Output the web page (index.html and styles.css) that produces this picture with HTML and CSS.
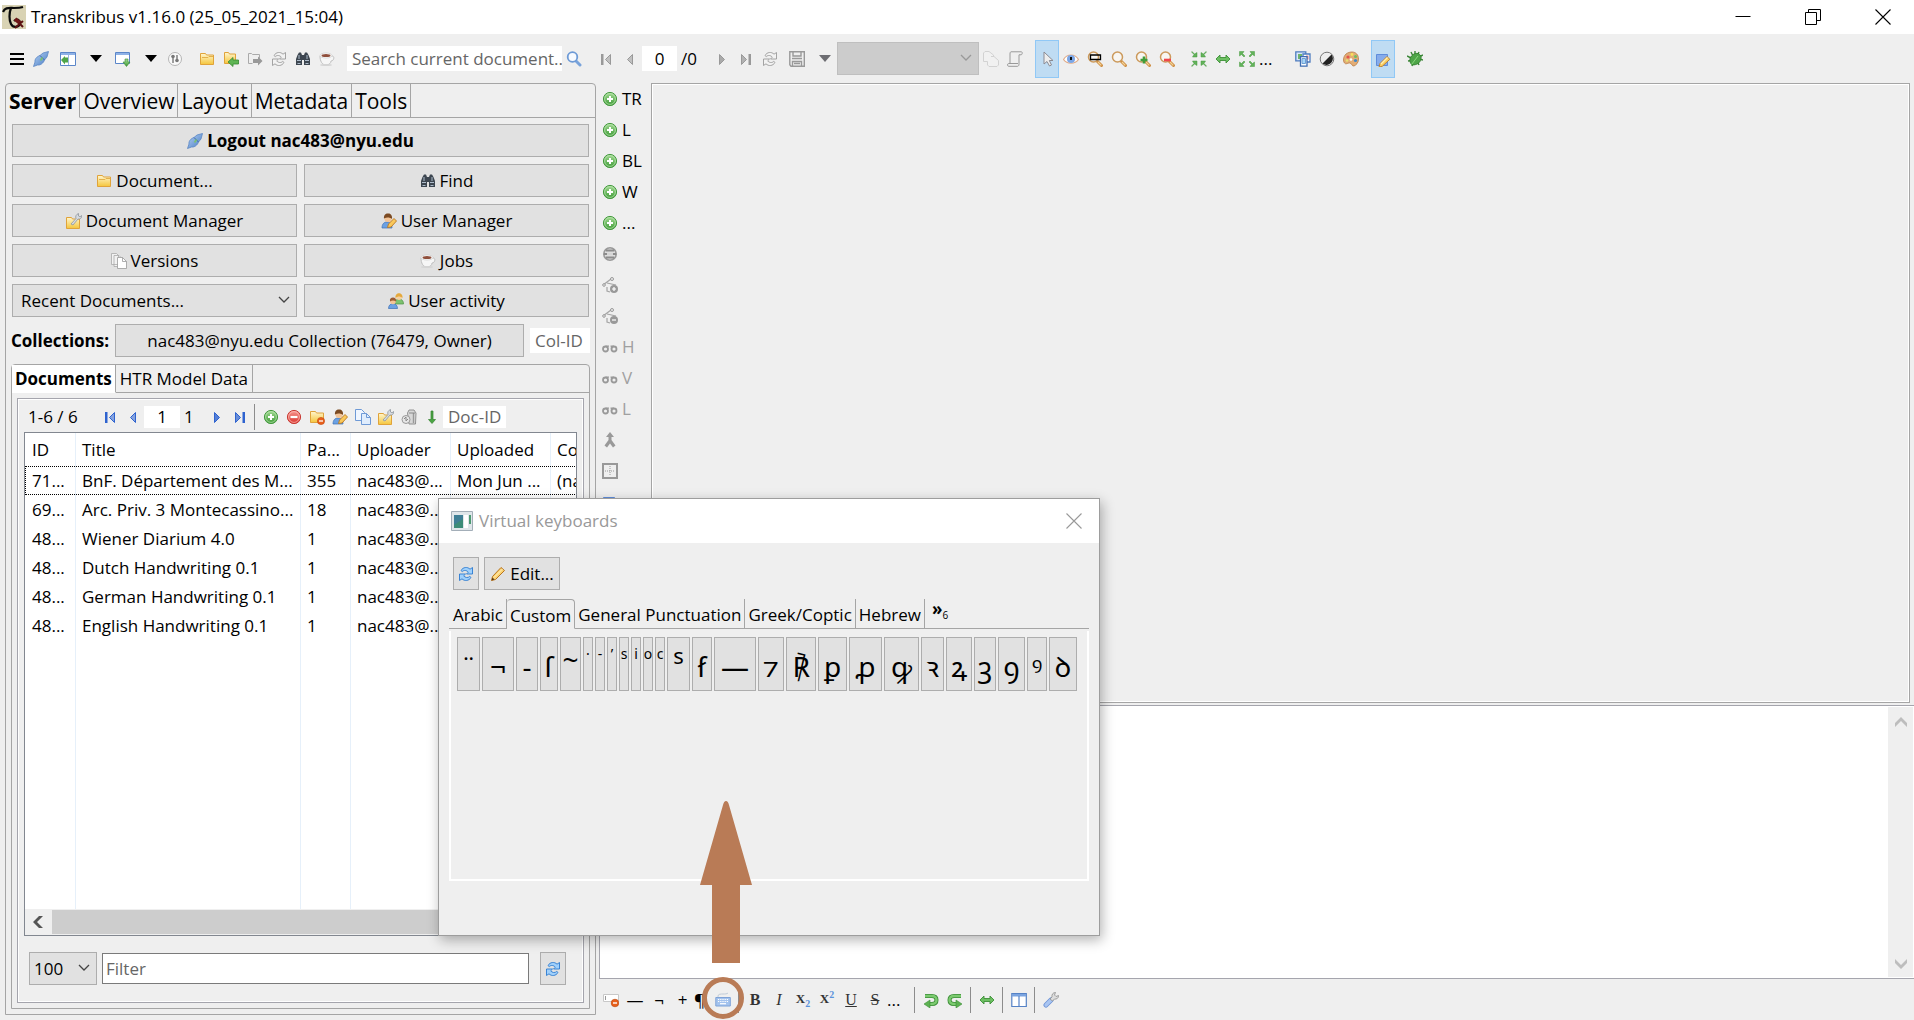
FILE: index.html
```html
<!DOCTYPE html>
<html lang="en">
<head>
<meta charset="utf-8">
<title>Transkribus v1.16.0</title>
<link rel="stylesheet" href="styles.css">
</head>
<body>
<svg class="sprite" aria-hidden="true">
  <defs>
    <linearGradient id="gGold" x1="0" y1="0" x2="0" y2="1"><stop offset="0" stop-color="#fff6cf"/><stop offset="1" stop-color="#f5c63c"/></linearGradient>
    <linearGradient id="gBlue" x1="0" y1="0" x2="1" y2="1"><stop offset="0" stop-color="#b9d5f7"/><stop offset="1" stop-color="#4478c0"/></linearGradient>
    <linearGradient id="gGreen" x1="0" y1="0" x2="0" y2="1"><stop offset="0" stop-color="#a5dc95"/><stop offset="1" stop-color="#3c9a35"/></linearGradient>
    <linearGradient id="gRed" x1="0" y1="0" x2="0" y2="1"><stop offset="0" stop-color="#f79a92"/><stop offset="1" stop-color="#d9322b"/></linearGradient>
  </defs>
  <symbol id="plug" viewBox="0 0 16 16"><path d="M.5 15.500L2 11C1.500 8 4 5.500 7 4.500L10 2l5.500-1.500L14 6l-2.500 3c-1 3-4 5.500-7 5z" fill="url(#gBlue)" stroke="#5b87c5" stroke-width=".8"/><path d="M7 4.500l4.500 4.500" stroke="#3d68a8"/><path d="M7.500 9.500l2-3" stroke="#79c26c" stroke-width="1.600"/></symbol>
  <symbol id="panel-l" viewBox="0 0 16 16"><path d="M.5 1.500h15v13H.5z" fill="#fff" stroke="#5b86c9"/><path d="M1 2h14v2H1z" fill="#8fb2e6"/><path d="M8.500 4v10" stroke="#9ab7e0"/><path d="M8 6.500v5H5v2L1 9l4-4v1.500z" fill="#4fa548"/></symbol>
  <symbol id="panel-d" viewBox="0 0 16 16"><path d="M.5 1.500h14v11H.5z" fill="#fff" stroke="#5b86c9"/><path d="M1 2h13v2H1z" fill="#8fb2e6"/><path d="M10 8h3v3h2l-3.500 4.500L8 11h2z" fill="url(#gGreen)" stroke="#3b8b35" stroke-width=".6"/></symbol>
  <symbol id="gear" viewBox="0 0 16 16"><circle cx="8" cy="8" r="6.500" fill="#fafafa" stroke="#b5b5b5"/><path d="M6 5v7M10 4v5" stroke="#777" stroke-width="1.400"/><circle cx="6" cy="5.500" r="1.800" fill="#777"/><circle cx="10" cy="9.500" r="1.800" fill="#777"/></symbol>
  <symbol id="folder" viewBox="0 0 16 16"><path d="M1.500 13.500v-11h5l1 1.500h7v9.500z" fill="url(#gGold)" stroke="#e0a33a"/><path d="M3 6.500h6l1-1h4" fill="none" stroke="#e3b04b"/></symbol>
  <symbol id="folder-in" viewBox="0 0 16 16"><path d="M1.500 12.500v-11h4l1 1.500h6v9.500z" fill="url(#gGold)" stroke="#e0a33a"/><path d="M15.500 9v4H10v2.500L5 11l5-4.500V9z" fill="#5fb554" stroke="#368a30" stroke-width=".8"/></symbol>
  <symbol id="export" viewBox="0 0 16 16"><path d="M1.500 12.500v-10h3l1 1h7v4M1.500 12.500h4" fill="none" stroke="#aaa"/><path d="M6 8h5V5.500L15.500 10 11 14.500V12H6z" fill="#999"/></symbol>
  <symbol id="refresh" viewBox="0 0 16 16"><g fill="#9fd0fb" stroke="#2b7bd0" stroke-width=".9" stroke-linejoin="round"><path d="M3 4.500C5 1 9.500.5 12 3.200L14.500 1.500V8H8.500l1.800-1.800C9 4.300 6 3.800 4.200 5.600z"/><path d="M13 11.500c-2 3.500-6.500 4-9 1.300L1.500 14.500V8h6L5.700 9.800c1.300 1.900 4.300 2.400 6.100.6z"/></g></symbol>
  <symbol id="refresh-g" viewBox="0 0 16 16"><g fill="#f2f2f2" stroke="#9a9a9a" stroke-width=".9" stroke-linejoin="round"><path d="M3 4.500C5 1 9.500.5 12 3.200L14.500 1.500V8H8.500l1.800-1.800C9 4.300 6 3.800 4.200 5.600z"/><path d="M13 11.500c-2 3.500-6.500 4-9 1.300L1.500 14.500V8h6L5.700 9.800c1.300 1.900 4.300 2.400 6.100.6z"/></g></symbol>
  <symbol id="binoc" viewBox="0 0 16 16"><path d="M2.500 4L4 1.500h2L7 4h2l1-2.500h2L13.500 4l1.500 4v6H9V9H7v5H1V8z" fill="#3d4650"/><path d="M2 9.500h4M10 9.500h4M4 4v4M12 4v4M2.500 12.500h3M10.500 12.500h3" stroke="#aebccb"/></symbol>
  <symbol id="cup" viewBox="0 0 16 16"><path d="M1 5c0 5 2 9 6 9 3 0 5-2 5-4 3 0 4-5 1-5z" fill="#f6f6f6" stroke="#bbb" stroke-width=".9"/><ellipse cx="7" cy="4.500" rx="6" ry="2.500" fill="#fff" stroke="#ccc" stroke-width=".7"/><ellipse cx="7" cy="4.600" rx="4.500" ry="1.500" fill="#8f4f3c"/><ellipse cx="7" cy="14" rx="6" ry="1" fill="#d4d4d4"/></symbol>
  <symbol id="lens" viewBox="0 0 16 16"><path d="M10 10l4 4" stroke="#79a3db" stroke-width="3" stroke-linecap="round"/><circle cx="6.500" cy="6" r="4.800" fill="#f6faff" stroke="#6d9ad6" stroke-width="1.800"/></symbol>
  <symbol id="zoom" viewBox="0 0 16 16"><path d="M10 10l4.500 4.500" stroke="#cf8f45" stroke-width="3" stroke-linecap="round"/><path d="M11 11l3.300 3.300" stroke="#f3d497" stroke-width="1.200"/><circle cx="6.500" cy="6" r="5" fill="#f8f6f2" stroke="#cc9a5c" stroke-width="1.500"/></symbol>
  <symbol id="first" viewBox="0 0 16 16"><path d="M3 3h2.500v11H3z" fill="currentColor"/><path d="M12.500 3.500v10l-5-5z" fill="currentColor" fill-opacity=".55" stroke="currentColor"/></symbol>
  <symbol id="prev" viewBox="0 0 16 16"><path d="M10.500 3.500v10l-5-5z" fill="currentColor" fill-opacity=".55" stroke="currentColor"/></symbol>
  <symbol id="next" viewBox="0 0 16 16"><path d="M5.500 3.500v10l5-5z" fill="currentColor" fill-opacity=".8" stroke="currentColor"/></symbol>
  <symbol id="last" viewBox="0 0 16 16"><path d="M10.500 3H13v11h-2.500z" fill="currentColor"/><path d="M3.500 3.500v10l5-5z" fill="currentColor" fill-opacity=".7" stroke="currentColor"/></symbol>
  <symbol id="save" viewBox="0 0 16 16"><path d="M.8.800h14.500v14.500H2l-1.200-1.500z" fill="#efefef" stroke="#999" stroke-width="1.400"/><path d="M4 1v4h8V1M3 7.500h10M3.500 15v-4.500h9V15M5 12.500h6" fill="none" stroke="#999" stroke-width="1.400"/></symbol>
  <symbol id="pages-g" viewBox="0 0 16 16"><path d="M.5 4V2l1.500-1.500h4L10.500 4v2M.5 4v6.500h4V14l1.500 1.500h8l1.500-1.500V9.500L11 5.500H8" fill="#f1f1f1" stroke="#d2d2d2"/></symbol>
  <symbol id="scroll" viewBox="0 0 16 16"><path d="M4 .8h10.500c1 0 1 3-.5 3h-2v9c0 1.500-.5 2.500-1.500 2.500H1.500C.3 15.300.3 12.500 1.500 12.500H3V3C3 1.500 3.500.8 4 .8z" fill="#efefef" stroke="#999"/><path d="M3 12.500h8" stroke="#999"/></symbol>
  <symbol id="cursor" viewBox="0 0 16 16"><path d="M5 1v12l3-2.500L10.500 15l2-1-2.200-4.500H14z" fill="#eee" stroke="#8b8b93"/></symbol>
  <symbol id="eye" viewBox="0 0 16 16"><path d="M.5 8.500C4 2.500 12 2.500 15.500 8.500 12 13.500 4 13.500.5 8.500z" fill="#fff" stroke="#e0ab88" stroke-width="1.200"/><circle cx="8" cy="8" r="4" fill="#7ba6e6"/><path d="M7 6h2v3H7z" fill="#111"/></symbol>
  <symbol id="fit-in" viewBox="0 0 16 16"><g fill="#62b35a" stroke="#4a9a43" stroke-width=".5"><path d="M1 .5l2.500 2.500L6 1.500V6H1.500L3 3.500.5 1z"/><path d="M15 .5L12.500 3 10 1.500V6h4.500L13 3.500 15.500 1z"/><path d="M1 15.500L3.500 13 6 14.500V10H1.500L3 12.500.5 15z"/><path d="M15 15.500L12.500 13 10 14.500V10h4.500L13 12.500l2.500 2.500z"/></g></symbol>
  <symbol id="fit-out" viewBox="0 0 16 16"><g fill="#62b35a" stroke="#4a9a43" stroke-width=".5"><path d="M.5.500H5L3.500 2.500 6 5 5 6 2.500 3.500.5 5z"/><path d="M15.500.500H11l1.500 2L10 5l1 1 2.500-2.500 2 1.500z"/><path d="M.5 15.500H5L3.500 13.500 6 11 5 10l-2.500 2.500L.5 11z"/><path d="M15.500 15.500H11l1.500-2L10 11l1-1 2.500 2.500 2-1.500z"/></g></symbol>
  <symbol id="h-arrow" viewBox="0 0 16 16"><path d="M1 8l4-4v2.500h6V4l4 4-4 4V9.500H5V12z" fill="#6cbf61" stroke="#3d8e38" stroke-width=".9"/></symbol>
  <symbol id="layers" viewBox="0 0 16 16"><path d="M.8.800h10v9h-10z" fill="#d8e7fb" stroke="#4e7cbf" stroke-width="1.300"/><path d="M3 3h4v5H3z" fill="#71b46b"/><path d="M8 3h7v8H8z" fill="#fff" stroke="#4e7cbf" stroke-width="1.300"/><path d="M11 4.500h2.500v4H11z" fill="#e28a8a"/><path d="M5.500 5.700H12v9.500H5.500z" fill="#fff" stroke="#3d6cb2" stroke-width="1.300"/><path d="M7 7.500h3.500v5H7z" fill="#a6d5f7" stroke="#6ea0d5"/></symbol>
  <symbol id="contrast" viewBox="0 0 16 16"><circle cx="8" cy="8" r="6.800" fill="#eee" stroke="#777"/><path d="M12.500 3.500a6.400 6.400 0 0 1-9 9z" fill="#222"/></symbol>
  <symbol id="palette" viewBox="0 0 16 16"><path d="M9 1c4 0 6.500 3 6.500 7S13 14 11 15c-2 .5-2-2.500-4-3S3 14 1.500 12 0 6 3 3c2-1.500 4-2 6-2z" fill="#e2ad76" stroke="#b97c44" stroke-width=".8"/><circle cx="5" cy="6" r="1.600" fill="#e5534a"/><circle cx="9" cy="3.500" r="1.400" fill="#f8e15c"/><circle cx="12.500" cy="5.500" r="1.500" fill="#6fbf5f"/><circle cx="12.500" cy="9.500" r="1.600" fill="#3f87c9"/><circle cx="8" cy="8.500" r="1.300" fill="#fff"/><circle cx="4" cy="9.500" r="1.300" fill="#e8e36f"/></symbol>
  <symbol id="edit-shape" viewBox="0 0 16 16"><path d="M1.500 3.500h11v11h-11z" fill="#86aceb" stroke="#5f8ddb"/><path d="M4 16l1-3.500 7-7 2.800 2.800-7.500 7z" fill="#fbcf62" stroke="#bd7d25" stroke-width=".9"/><path d="M6 13l6.500-6.500" stroke="#fff0b5" stroke-width="1.300"/></symbol>
  <symbol id="bug" viewBox="0 0 16 16"><path d="M0 5l4 2M1 10l4-.5M5 15l1-4M4 1l2 4M8 0v5M12 1l-2 4M16 4l-4 2M16 9l-4-1M12 14l-2-4" stroke="#3a8636" stroke-width="1.400"/><path d="M7 3c4-2 8 1 7 5-1 4-4 6-9 6C1 10 3 5 7 3z" fill="#4ea548" stroke="#2e7a2b" stroke-width=".8"/><path d="M4.500 13.500L11 5" stroke="#8ad77d"/></symbol>
  <symbol id="plus" viewBox="0 0 16 16"><circle cx="8" cy="8" r="6.600" fill="url(#gGreen)" stroke="#459a40"/><circle cx="8" cy="8" r="5.400" fill="none" stroke="#bfe6b4" stroke-width=".7"/><path d="M8 5v6M5 8h6" stroke="#fff" stroke-width="2"/></symbol>
  <symbol id="minus" viewBox="0 0 16 16"><circle cx="8" cy="8" r="6.600" fill="url(#gRed)" stroke="#c83b34"/><circle cx="8" cy="8" r="5.400" fill="none" stroke="#ffc4be" stroke-width=".7"/><path d="M4.500 8h7" stroke="#fff" stroke-width="2.200"/></symbol>
  <symbol id="folder-x" viewBox="0 0 16 16"><path d="M1.500 13.500v-11h5l1 1.500h7v9.500z" fill="url(#gGold)" stroke="#e0a33a"/><circle cx="12" cy="12" r="3.600" fill="#e8601c" stroke="#c2470c" stroke-width=".6"/><path d="M10 12h4" stroke="#fff" stroke-width="1.300"/></symbol>
  <symbol id="folder-w" viewBox="0 0 16 16"><path d="M.5 15.500v-11h5l1 1.500h7v9.500z" fill="url(#gGold)" stroke="#e0a33a"/><path d="M5 11l5-5.500c-.8-2 0-4 2.500-5v2.500l1.500.8L15.700 2.500c.3 2.500-1.700 4-3.700 3.500L7 12z" fill="#d7dbe0" stroke="#8e959d" stroke-width=".8"/></symbol>
  <symbol id="user-edit" viewBox="0 0 16 16"><path d="M1 15c0-4 2-6 5-6s5 2 5 6z" fill="#6ba1e3" stroke="#3c70b4" stroke-width=".7"/><circle cx="7" cy="5.500" r="3.600" fill="#f3c497"/><path d="M3 5.500c-.5-3.500 2-5.500 4.500-5C10 .5 11.500 3 11 6 9 4.500 6 4 3 5.500z" fill="#7b4a22"/><path d="M6.500 14.500l1-3.500L13 5.500l2.500 2.500-5.500 6z" fill="#fac85a" stroke="#b97620" stroke-width=".9"/></symbol>
  <symbol id="users" viewBox="0 0 16 16"><path d="M7 11c0-3 1-5 4-5s4.500 2 4.500 5z" fill="#7cc26f" stroke="#4d9345" stroke-width=".7"/><circle cx="11" cy="4" r="3" fill="#f6d09f"/><path d="M7.500 5C7 2 9 .3 11 .3S15 2 14.500 5c-2-2-5-2-7 0z" fill="#e5a93c"/><path d="M.5 15.500c0-3 2-5 4.500-5s4.500 2 4.500 5z" fill="#6ba1e3" stroke="#3c70b4" stroke-width=".7"/><circle cx="5" cy="8.500" r="2.800" fill="#f3c497"/><path d="M2 8.500c-.5-3 1-4 3-4s3.500 1 3 4c-2-1.500-4-1.500-6 0z" fill="#9c5c33"/></symbol>
  <symbol id="versions" viewBox="0 0 16 16"><path d="M.5.500h5l2 2v9h-7zM3 2.500h5l2 2v9H3z" fill="#f2f2f2" stroke="#aaa" stroke-width=".8"/><path d="M6.500 4.500h5l4 4v7h-9z" fill="#fff" stroke="#9a9a9a" stroke-width=".8"/><path d="M11.500 4.500v4h4" fill="none" stroke="#9a9a9a" stroke-width=".8"/></symbol>
  <symbol id="copy" viewBox="0 0 16 16"><path d="M.5.500h6l3 3v8h-9z" fill="#f0f6ff" stroke="#6f9ad6"/><path d="M6.500 4.500h5l4 4v7h-9z" fill="#e0edfd" stroke="#6f9ad6"/><path d="M11.500 4.500v4h4" fill="none" stroke="#6f9ad6"/></symbol>
  <symbol id="trash" viewBox="0 0 16 16"><path d="M6.500 4L8 1h5l2 3-.5 11H8z" fill="#d8d8d8" stroke="#888" stroke-width=".9"/><path d="M12.500 4v10" stroke="#999" stroke-width="1.400"/><path d="M8 4h6" stroke="#888"/><circle cx="5" cy="10.500" r="4" fill="#e6e6e6" stroke="#999"/><path d="M3 10l2-2v4l2-2" fill="none" stroke="#888"/></symbol>
  <symbol id="down" viewBox="0 0 16 16"><path d="M7 2h2v8.500h2.500L8 14.500 4.500 10.500H7z" fill="#4ba544" stroke="#34822f" stroke-width=".7"/></symbol>
  <symbol id="ring" viewBox="0 0 16 16"><circle cx="8" cy="8" r="6.200" fill="#ddd" stroke="#999" stroke-width="1.600"/><path d="M2 8h12M4 4.500h8M4 11.500h8" stroke="#8c8c8c" stroke-width="1.800"/><path d="M5 8h6" stroke="#eee" stroke-width="1.500"/></symbol>
  <symbol id="node-a" viewBox="0 0 16 16"><path d="M1 8l8-6M5 6l9 2M5 10v4l3 1" fill="none" stroke="#a4a4a4" stroke-width="1.200"/><circle cx="10" cy="2" r="1.500" fill="#efefef" stroke="#999"/><circle cx="2" cy="8" r="1.300" fill="#efefef" stroke="#999"/><circle cx="12" cy="12" r="4" fill="#999"/><path d="M12 10v4M10 12h4" stroke="#fff" stroke-width="1.200"/></symbol>
  <symbol id="node-r" viewBox="0 0 16 16"><path d="M1 8l8-6M5 6l9 2M5 10v4l3 1" fill="none" stroke="#a4a4a4" stroke-width="1.200"/><circle cx="10" cy="2" r="1.500" fill="#efefef" stroke="#999"/><circle cx="2" cy="8" r="1.300" fill="#efefef" stroke="#999"/><circle cx="12" cy="12" r="4" fill="#999"/><path d="M10 12h4" stroke="#fff" stroke-width="1.200"/></symbol>
  <symbol id="cut" viewBox="0 0 16 16"><circle cx="3.500" cy="10" r="2.500" fill="none" stroke="#999" stroke-width="1.800"/><circle cx="12" cy="10" r="2.500" fill="none" stroke="#999" stroke-width="1.800"/><path d="M3.500 7.200H7M8.500 7.200H12M9.500 7v3" stroke="#999" stroke-width="1.200"/></symbol>
  <symbol id="merge" viewBox="0 0 16 16"><path d="M8 0l4 5H9.500v3l4 5.500-2.500 2-3-4-3 4-2.500-2 4-5.500V5H4z" fill="#999"/></symbol>
  <symbol id="grid" viewBox="0 0 16 16"><path d="M1 1h14v14H1z" fill="#efefef" stroke="#999" stroke-width="2"/><path d="M8 3v10M3 8h10" stroke="#999" stroke-dasharray="1 1"/></symbol>
  <symbol id="pencil" viewBox="0 0 16 16"><path d="M1.500 14.500l1-4L11 1.500l3.500 3-9 9z" fill="#fbd272" stroke="#b8741d"/><path d="M1.500 14.500l1-3 2 2z" fill="#5a3b1a"/><path d="M4 11.500L12.500 3" stroke="#fff2c2"/></symbol>
  <symbol id="region-x" viewBox="0 0 16 16"><path d="M.5 2.500h15v7H.5z" fill="#fff" stroke="#c8c8c8"/><path d="M2.500 4v4" stroke="#999"/><circle cx="12" cy="11" r="3.800" fill="#e8601c" stroke="#b84309" stroke-width=".6"/><path d="M10 11h4" stroke="#fff" stroke-width="1.400"/></symbol>
  <symbol id="keyboard" viewBox="0 0 16 16"><path d="M3 5V4c0-2 3-2 5-2s4 0 5-1" fill="none" stroke="#c0cbd8"/><path d="M.8 5.500h14.500v8.500H.8z" fill="#a4c3ee" stroke="#7fa3d8"/><path d="M3 7.500h10M3 9.500h10" stroke="#fff" stroke-width="1.200" stroke-dasharray="1.200 1"/><path d="M5 11.700h6" stroke="#fff" stroke-width="1.200"/></symbol>
  <symbol id="undo" viewBox="0 0 16 16"><path d="M2 4h7c3 0 4.500 1.500 4.500 4S12 12 9 12H6" fill="none" stroke="#3d8e38" stroke-width="4"/><path d="M2 4h7c3 0 4.500 1.500 4.500 4S12 12 9 12H5" fill="none" stroke="#7bca6f" stroke-width="2.400"/><path d="M7 8v8l-6-4z" fill="#5cb151" stroke="#3d8e38" stroke-width=".6"/></symbol>
  <symbol id="split" viewBox="0 0 16 16"><path d="M.8 1.500h14.500v13H.8z" fill="#fff" stroke="#5582c6" stroke-width="1.200"/><path d="M1 2h14v2.500H1z" fill="#7ba4e0"/><path d="M8 4v10" stroke="#5582c6" stroke-width="1.200"/></symbol>
  <symbol id="wrench" viewBox="0 0 16 16"><path d="M3 13l5-5" stroke="#6e94d6" stroke-width="5" stroke-linecap="round"/><path d="M3 13l5-5" stroke="#a9c5f2" stroke-width="3.200" stroke-linecap="round"/><path d="M7 7l2-2c-.5-2.500 1-4.500 3.500-4.500l-1 2.500 1.500 1.500 2.500-1c.3 2.500-2 4-4 3.500L9.500 9z" fill="#ddd" stroke="#8e8e8e" stroke-width=".8"/></symbol>
  <symbol id="caret" viewBox="0 0 12 8"><path d="M0 0h12L6 7z" fill="currentColor"/></symbol>
  <symbol id="chev" viewBox="0 0 12 8"><path d="M1 1l5 5 5-5" fill="none" stroke="currentColor" stroke-width="1.300"/></symbol>
  <symbol id="sb-chev" viewBox="0 0 12 10"><path d="M0 6l6-6 6 6v4L6 4l-6 6z" fill="currentColor"/></symbol>
  <symbol id="close" viewBox="0 0 16 16"><path d="M.5.500l15 15M15.500.500l-15 15" stroke="currentColor" stroke-width="1.100"/></symbol>
</svg>

<div class="app">
  <header class="titlebar">
    <svg class="logo" viewBox="0 0 24 24" role="img" aria-label="Transkribus"><path d="M0 0h24v24H0z" fill="#d9d3b4"/><path d="M1 7C3 2 7 3 12 3s6 0 9-1M9 3C7 8 7 15 9 19c2 4 8 4 9-1 0-3-3-5-6-2" fill="none" stroke="#0a0a0a" stroke-width="2.200"/><path d="M13 14l5 4" stroke="#6e1616" stroke-width="4"/><path d="M17 18l4 4M21 16l-8 7" stroke="#5c1212" stroke-width="2"/></svg>
    <h1>Transkribus v1.16.0 (25_05_2021_15:04)</h1>
    <div class="winbtns">
      <button aria-label="Minimize"><svg viewBox="0 0 16 16"><path d="M.5 7.500h15" stroke="#000"/></svg></button>
      <button aria-label="Restore"><svg viewBox="0 0 16 16"><path d="M.5 3.500h11v12H.5zM3.500 3.500v-3h12v11h-4" fill="none" stroke="#000"/></svg></button>
      <button aria-label="Close"><svg><use href="#close"/></svg></button>
    </div>
  </header>

  <div class="toolbar" role="toolbar" aria-label="Main">
    <button class="t" aria-label="Menu"><svg viewBox="0 0 16 16"><path d="M1 3h14M1 8h14M1 13h14" stroke="#000" stroke-width="2"/></svg></button>
    <button class="t" aria-label="Login"><svg><use href="#plug"/></svg></button>
    <button class="t wide" aria-label="View"><svg><use href="#panel-l"/></svg></button>
    <button class="t drop" aria-label="View options"><svg><use href="#caret"/></svg></button>
    <button class="t wide" aria-label="Profile"><svg><use href="#panel-d"/></svg></button>
    <button class="t drop" aria-label="Profile options"><svg><use href="#caret"/></svg></button>
    <button class="t" aria-label="Settings"><svg><use href="#gear"/></svg></button>
    <i class="gap"></i>
    <button class="t" aria-label="Open"><svg><use href="#folder"/></svg></button>
    <button class="t" aria-label="Import"><svg><use href="#folder-in"/></svg></button>
    <button class="t" aria-label="Export"><svg><use href="#export"/></svg></button>
    <button class="t" aria-label="Reload"><svg><use href="#refresh-g"/></svg></button>
    <button class="t" aria-label="Find"><svg><use href="#binoc"/></svg></button>
    <button class="t" aria-label="Jobs"><svg><use href="#cup"/></svg></button>
    <i class="gap"></i>
    <input class="search" type="text" placeholder="Search current document..." aria-label="Search current document">
    <button class="t" aria-label="Search"><svg><use href="#lens"/></svg></button>
    <i class="gap"></i>
    <button class="t off" aria-label="First page"><svg><use href="#first"/></svg></button>
    <button class="t off" aria-label="Previous page"><svg><use href="#prev"/></svg></button>
    <input class="page" type="text" value="0" aria-label="Page">
    <span class="total">/0</span>
    <button class="t off" aria-label="Next page"><svg><use href="#next"/></svg></button>
    <button class="t off" aria-label="Last page"><svg><use href="#last"/></svg></button>
    <button class="t" aria-label="Reload page"><svg><use href="#refresh-g"/></svg></button>
    <button class="t wide" aria-label="Save"><svg><use href="#save"/></svg></button>
    <button class="t drop dim" aria-label="Save options"><svg><use href="#caret"/></svg></button>
    <span class="combo status"><select disabled aria-label="Status"><option></option></select><svg><use href="#chev"/></svg></span>
    <button class="t" aria-label="Versions"><svg><use href="#pages-g"/></svg></button>
    <button class="t" aria-label="Transcript"><svg><use href="#scroll"/></svg></button>
    <i class="gap"></i>
    <button class="t on" aria-label="Select"><svg><use href="#cursor"/></svg></button>
    <button class="t" aria-label="Visibility"><svg><use href="#eye"/></svg></button>
    <button class="t" aria-label="Zoom selection"><svg viewBox="0 0 16 16"><use href="#zoom"/><path d="M3.500 4h10v4.500h-10z" fill="none" stroke="#000" stroke-width="1.300"/></svg></button>
    <button class="t" aria-label="Loupe"><svg><use href="#zoom"/></svg></button>
    <button class="t" aria-label="Zoom in"><svg viewBox="0 0 16 16"><use href="#zoom"/><path d="M9 5.500v7M5.500 9h7" stroke="#3f9d3a" stroke-width="2.600"/></svg></button>
    <button class="t" aria-label="Zoom out"><svg viewBox="0 0 16 16"><use href="#zoom"/><path d="M5 9h7" stroke="#f0474c" stroke-width="2.600"/></svg></button>
    <i class="gap"></i>
    <button class="t" aria-label="Fit page"><svg><use href="#fit-in"/></svg></button>
    <button class="t" aria-label="Fit width"><svg><use href="#h-arrow"/></svg></button>
    <button class="t" aria-label="Original size"><svg><use href="#fit-out"/></svg></button>
    <button class="t start" aria-label="More">...</button>
    <i class="gap"></i>
    <button class="t" aria-label="Image versions"><svg><use href="#layers"/></svg></button>
    <button class="t" aria-label="Contrast"><svg><use href="#contrast"/></svg></button>
    <button class="t" aria-label="Colours"><svg><use href="#palette"/></svg></button>
    <i class="gap"></i>
    <button class="t on" aria-label="Edit mode"><svg><use href="#edit-shape"/></svg></button>
    <i class="gap"></i>
    <button class="t" aria-label="Report bug"><svg><use href="#bug"/></svg></button>
  </div>

  <main class="main">
    <aside class="side">
      <div class="tabs big" role="tablist">
        <button role="tab" class="sel" aria-selected="true">Server</button><button role="tab">Overview</button><button role="tab">Layout</button><button role="tab">Metadata</button><button role="tab">Tools</button>
      </div>
      <div class="server">
        <div class="btns">
          <button class="b full"><svg><use href="#plug"/></svg>Logout nac483@nyu.edu</button>
          <button class="b"><svg><use href="#folder"/></svg>Document...</button>
          <button class="b"><svg><use href="#binoc"/></svg>Find</button>
          <button class="b"><svg><use href="#folder-w"/></svg>Document Manager</button>
          <button class="b"><svg><use href="#user-edit"/></svg>User Manager</button>
          <button class="b"><svg><use href="#versions"/></svg>Versions</button>
          <button class="b"><svg><use href="#cup"/></svg>Jobs</button>
          <span class="combo"><select aria-label="Recent documents"><option>Recent Documents...</option></select><svg><use href="#chev"/></svg></span>
          <button class="b"><svg><use href="#users"/></svg>User activity</button>
        </div>
        <div class="coll">
          <label for="colid">Collections:</label>
          <button class="b">nac483@nyu.edu Collection (76479, Owner)</button>
          <input id="colid" type="text" placeholder="Col-ID">
        </div>
        <section class="docs">
          <div class="tabs" role="tablist"><button role="tab" class="sel white" aria-selected="true">Documents</button><button role="tab">HTR Model Data</button></div>
          <div class="group">
            <div class="pager">
              <span class="range">1-6 / 6</span>
              <button class="p nav" aria-label="First"><svg><use href="#first"/></svg></button>
              <button class="p nav" aria-label="Previous"><svg><use href="#prev"/></svg></button>
              <input class="pg" type="text" value="1" aria-label="Page">
              <span class="of">1</span>
              <button class="p nav" aria-label="Next"><svg><use href="#next"/></svg></button>
              <button class="p nav" aria-label="Last"><svg><use href="#last"/></svg></button>
              <i class="sep"></i>
              <button class="p" aria-label="Add"><svg><use href="#plus"/></svg></button>
              <button class="p" aria-label="Remove"><svg><use href="#minus"/></svg></button>
              <button class="p" aria-label="Delete document"><svg><use href="#folder-x"/></svg></button>
              <button class="p" aria-label="Edit user"><svg><use href="#user-edit"/></svg></button>
              <button class="p" aria-label="Copy"><svg><use href="#copy"/></svg></button>
              <button class="p" aria-label="Manage"><svg><use href="#folder-w"/></svg></button>
              <button class="p" aria-label="Trash"><svg><use href="#trash"/></svg></button>
              <button class="p" aria-label="Download"><svg><use href="#down"/></svg></button>
              <input class="docid" type="text" placeholder="Doc-ID" aria-label="Doc-ID">
            </div>
            <div class="list">
              <div class="rows">
                <table>
                  <colgroup><col class="c50"><col class="c225"><col class="c50"><col class="c100"><col class="c100"><col class="c27"></colgroup>
                  <thead><tr><th>ID</th><th>Title</th><th>Pa...</th><th>Uploader</th><th>Uploaded</th><th>Co</th></tr></thead>
                  <tbody>
                    <tr class="focus"><td>71...</td><td>BnF. Département des M...</td><td>355</td><td>nac483@...</td><td>Mon Jun ...</td><td>(na</td></tr>
                    <tr><td>69...</td><td>Arc. Priv. 3 Montecassino...</td><td>18</td><td>nac483@...</td><td></td><td></td></tr>
                    <tr><td>48...</td><td>Wiener Diarium 4.0</td><td>1</td><td>nac483@...</td><td></td><td></td></tr>
                    <tr><td>48...</td><td>Dutch Handwriting 0.1</td><td>1</td><td>nac483@...</td><td></td><td></td></tr>
                    <tr><td>48...</td><td>German Handwriting 0.1</td><td>1</td><td>nac483@...</td><td></td><td></td></tr>
                    <tr><td>48...</td><td>English Handwriting 0.1</td><td>1</td><td>nac483@...</td><td></td><td></td></tr>
                  </tbody>
                </table>
              </div>
              <div class="hscroll"><svg class="left"><use href="#sb-chev"/></svg><span></span></div>
            </div>
            <div class="filter">
              <span class="combo"><select aria-label="Rows per page"><option>100</option></select><svg><use href="#chev"/></svg></span>
              <input type="text" placeholder="Filter" aria-label="Filter">
              <button class="b sq" aria-label="Refresh"><svg><use href="#refresh"/></svg></button>
            </div>
          </div>
        </section>
      </div>
    </aside>

    <section class="work">
      <div class="view">
        <div class="vtools" role="toolbar" aria-label="Segmentation">
          <button><svg><use href="#plus"/></svg>TR</button>
          <button><svg><use href="#plus"/></svg>L</button>
          <button><svg><use href="#plus"/></svg>BL</button>
          <button><svg><use href="#plus"/></svg>W</button>
          <button><svg><use href="#plus"/></svg>...</button>
          <button aria-label="Remove shape"><svg><use href="#ring"/></svg></button>
          <button aria-label="Add point"><svg><use href="#node-a"/></svg></button>
          <button aria-label="Remove point"><svg><use href="#node-r"/></svg></button>
          <button disabled><svg><use href="#cut"/></svg>H</button>
          <button disabled><svg><use href="#cut"/></svg>V</button>
          <button disabled><svg><use href="#cut"/></svg>L</button>
          <button aria-label="Merge"><svg><use href="#merge"/></svg></button>
          <button aria-label="Table"><svg><use href="#grid"/></svg></button>
          <button aria-label="Edit"><svg><use href="#edit-shape"/></svg></button>
        </div>
        <div class="canvas"></div>
      </div>
      <div class="editor">
        <textarea aria-label="Transcription"></textarea>
        <div class="vscroll"><svg><use href="#sb-chev"/></svg><svg class="flip"><use href="#sb-chev"/></svg></div>
      </div>
      <div class="toolbar foot" role="toolbar" aria-label="Text">
        <button class="t" aria-label="Remove region"><svg><use href="#region-x"/></svg></button>
        <button class="t">—</button>
        <button class="t">¬</button>
        <button class="t plus">+</button>
        <button class="t para start">¶</button>
        <button class="t key" aria-label="Virtual keyboards"><svg><use href="#keyboard"/></svg>
          <svg class="ringmark" viewBox="0 0 42 42"><circle cx="21" cy="21" r="18.500" fill="none" stroke="#b97b56" stroke-width="5"/></svg>
          <svg class="arrow" viewBox="0 0 52 162"><path d="M26 0q2 0 3 4l23 80H40v78H12V84H0L23 4q1-4 3-4z" fill="#b97b56"/></svg>
        </button>
        <i class="sep"></i>
        <button class="t fmt"><b>B</b></button>
        <button class="t fmt"><em>I</em></button>
        <button class="t fmt small"><span><b>X</b><sub>2</sub></span></button>
        <button class="t fmt small"><span><b>X</b><sup>2</sup></span></button>
        <button class="t fmt"><u>U</u></button>
        <button class="t fmt"><s>S</s></button>
        <button class="t start">...</button>
        <i class="sep"></i>
        <button class="t" aria-label="Undo"><svg><use href="#undo"/></svg></button>
        <button class="t" aria-label="Redo"><svg class="mirror"><use href="#undo"/></svg></button>
        <i class="sep"></i>
        <button class="t" aria-label="Fit"><svg><use href="#h-arrow"/></svg></button>
        <i class="sep"></i>
        <button class="t" aria-label="Split view"><svg><use href="#split"/></svg></button>
        <i class="sep"></i>
        <button class="t" aria-label="Options"><svg><use href="#wrench"/></svg></button>
      </div>
    </section>
  </main>

  <div class="dialog" role="dialog" aria-labelledby="vk">
    <div class="dhead">
      <svg class="dicon" viewBox="0 0 22 20"><path d="M.5.500h21v19H.5z" fill="#dfe6ea" stroke="#a3aeb8"/><path d="M3 4h9v13H3z" fill="#3c8c78"/><path d="M3 4h9v4L3 14z" fill="#3f7f96"/><path d="M13 4h4v13h-4z" fill="#fff"/><path d="M18 4h2v9h-2z" fill="#4d9a72"/></svg>
      <h2 id="vk">Virtual keyboards</h2>
      <button class="x" aria-label="Close"><svg><use href="#close"/></svg></button>
    </div>
    <div class="dbody">
      <div class="dbar"><button class="b sq" aria-label="Reload"><svg><use href="#refresh"/></svg></button><button class="b edit"><svg><use href="#pencil"/></svg>Edit...</button></div>
      <div class="tabs dtabs" role="tablist"><button role="tab">Arabic</button><button role="tab" class="sel" aria-selected="true">Custom</button><button role="tab">General Punctuation</button><button role="tab">Greek/Coptic</button><button role="tab">Hebrew</button><button class="more" aria-label="6 more">»<small>6</small></button></div>
      <div class="keys">
        <button class="k23">¨</button><button class="k32">¬</button><button class="k22">-</button><button class="k18">ſ</button><button class="k21 hi">~</button><button class="k10 sm">·</button><button class="k10 sm">-</button><button class="k10 sm">’</button><button class="k10 sm">s</button><button class="k10 sm">i</button><button class="k10 sm">o</button><button class="k10 sm">c</button><button class="k23 md">s</button><button class="k20">ẜ</button><button class="k42">—</button><button class="k26">⁊</button><button class="k30">℟</button><button class="k29">ꝑ</button><button class="k33">ꝓ</button><button class="k35">ꝙ</button><button class="k23">ꝛ</button><button class="k26">ꝝ</button><button class="k22">ꝫ</button><button class="k27">ꝯ</button><button class="k20">ꝰ</button><button class="k28">ꝺ</button>
      </div>
    </div>
  </div>
</div>
</body>
</html>
```
FILE: styles.css
```css
* { box-sizing: border-box; }
body { margin: 0; background: #efefef; color: #000; font: 17px/22px "Open Sans", "Noto Sans", sans-serif; }
button, input, select, textarea { font: inherit; color: inherit; margin: 0; padding: 0; border: 0; background: none; border-radius: 0; }
button { display: flex; align-items: center; justify-content: center; white-space: nowrap; }
svg { width: 16px; height: 16px; flex: none; display: block; }
h1, h2 { margin: 0; font-size: 17px; font-weight: 400; }
input::placeholder { color: #666; opacity: 1; }
.sprite { position: absolute; width: 0; height: 0; }

.app { position: relative; display: flex; flex-direction: column; min-height: 100vh; overflow: hidden; }

.titlebar { display: flex; align-items: center; gap: 5px; height: 34px; padding-left: 2px; background: #fff; }
.logo { width: 24px; height: 24px; }
.winbtns { display: flex; gap: 8px; margin-left: auto; }
.winbtns button { width: 62px; height: 33px; }

.toolbar { display: flex; align-items: center; height: 49px; padding: 0 5px; }
.toolbar > * { flex: none; }
.t { width: 24px; height: 38px; }
.t.wide { width: 30px; }
.t.drop { width: 25px; }
.t.start { justify-content: flex-start; }
.t.plus { width: 23px; }
.t.para { width: 17px; }
.t.drop svg { width: 12px; height: 8px; }
.t.dim { color: #6d6d72; }
.t.off { color: #999; }
.t.on { background: #bfdcf3; border: 1px solid #90c8f6; }
.gap { width: 8px; }
.sep { flex: none; width: 1px; height: 26px; margin: 0 4px 0 3px; background: #8c8c8c; }
.search { width: 215px; height: 25px; padding-left: 5px; background: #fff; }
.page { width: 35px; height: 25px; background: #fff; text-align: center; }
.total { width: 33px; padding-left: 4px; }

.combo { position: relative; display: block; }
.combo select { width: 100%; height: 33px; padding: 0 8px; appearance: none; background: #e1e1e1; border: 1px solid #adadad; }
.combo svg { position: absolute; right: 7px; top: 12px; width: 12px; height: 8px; color: #444; pointer-events: none; }
.combo.status { width: 142px; }
.combo.status select { background: #ccc; border-color: #bfbfbf; opacity: 1; }
.combo.status svg { color: #999; }

.main { flex: 1; display: grid; grid-template-columns: 599px minmax(0, 1fr); }
.side { margin: 0 3px 5px 5px; border: 1px solid #a5a5a5; border-radius: 4px 4px 0 0; display: flex; flex-direction: column; }
.tabs { display: flex; }
.tabs::after { content: ""; flex: 1; border-bottom: 1px solid #a5a5a5; }
.tabs button { flex: none; height: 28px; padding: 0 4px; border-right: 1px solid #a5a5a5; border-bottom: 1px solid #a5a5a5; }
.tabs button.sel { border-bottom-color: transparent; }
.tabs.big { font-size: 21px; }
.tabs.big button { height: 34px; padding: 0 3px; }
.tabs .sel { font-weight: 700; }
.docs .tabs .sel { padding: 0 3px; }
.tabs .white { background: #fff; }

.server { flex: 1; display: flex; flex-direction: column; padding: 6px 5px 5px; }
.btns { display: grid; grid-template-columns: 1fr 1fr; gap: 7px; padding: 0 1px; }
.b { height: 33px; gap: 4px; background: #e1e1e1; border: 1px solid #adadad; }
.b.full { grid-column: 1 / -1; font-weight: 700; }
.b.sq { width: 26px; }
.coll { display: flex; align-items: center; gap: 6px; margin: 7px 0; }
.coll label { font-weight: 700; }
.coll .b { flex: 1; }
.coll input { width: 60px; height: 25px; padding-left: 5px; background: #fff; }

.docs { flex: 1; display: flex; flex-direction: column; border: 1px solid #a5a5a5; border-radius: 4px 4px 0 0; }
.group { flex: 1; display: flex; flex-direction: column; margin: 5px; padding: 6px; border: 1px solid #a5a5ad; box-shadow: inset 0 0 0 1px #fff; }
.pager { display: flex; align-items: center; height: 24px; margin-bottom: 3px; padding-left: 4px; }
.range { width: 70px; }
.p { width: 23px; flex: none; }
.nav { color: #2e63cf; }
.pg { width: 36px; height: 22px; background: #fff; text-align: center; }
.of { width: 25px; padding-left: 4px; }
.docid { width: 63px; height: 22px; padding-left: 5px; background: #fff; }

.list { flex: 1; display: flex; flex-direction: column; border: 1px solid #828790; background: #fff; }
.rows { flex: 1; overflow: hidden; width: 0; min-width: 100%;
  background:
    linear-gradient(#e6f0fa, #e6f0fa) 50px 0 / 1px 100% no-repeat,
    linear-gradient(#e6f0fa, #e6f0fa) 275px 0 / 1px 100% no-repeat,
    linear-gradient(#e6f0fa, #e6f0fa) 325px 0 / 1px 100% no-repeat,
    linear-gradient(#e6f0fa, #e6f0fa) 425px 0 / 1px 100% no-repeat,
    linear-gradient(#e6f0fa, #e6f0fa) 525px 0 / 1px 100% no-repeat; }
table { table-layout: fixed; border-collapse: collapse; width: 552px; }
.c27 { width: 27px; }
.c50 { width: 50px; }
.c100 { width: 100px; }
.c225 { width: 225px; }
th, td { height: 29px; padding: 0 0 0 7px; text-align: left; font-weight: 400; white-space: nowrap; overflow: hidden; }
th { height: 33px; }
.focus { outline: 1px dotted #000; outline-offset: -1px; }
.hscroll { display: flex; align-items: center; height: 26px; background: #efefef; }
.hscroll .left { width: 12px; height: 10px; margin: 0 8px 0 7px; transform: rotate(-90deg); color: #555; }
.hscroll span { flex: 1; height: 24px; background: #cdcdcd; }
.filter { display: flex; align-items: center; gap: 5px; padding: 16px 11px 11px 5px; }
.filter .combo { width: 68px; }
.filter select { padding: 0 4px; }
.filter input { flex: 1; height: 31px; padding-left: 3px; background: #fff; border: 1px solid #7a7a7a; }
.filter .b { margin-left: 6px; }

.work { display: flex; flex-direction: column; }
.view { flex: 1; display: flex; margin-right: 4px; }
.vtools { width: 52px; padding-left: 3px; }
.vtools button { height: 31px; gap: 4px; }
.vtools button:disabled { color: #a0a0a0; }
.canvas { flex: 1; border: 1px solid #a5a5a5; box-shadow: inset 0 0 0 1px #fff; }
.editor { display: flex; height: 274px; margin-top: 2px; padding-right: 1px; border: 1px solid #a5a5ad; border-right: 0; background: #fff; }
.editor textarea { flex: 1; resize: none; outline: 0; }
.vscroll { display: flex; flex-direction: column; justify-content: space-between; align-items: center; width: 25px; margin: 1px 0; padding: 10px 0 8px; background: #efefef; color: #bdbdbd; }
.vscroll svg { width: 12px; height: 10px; }
.flip { transform: rotate(180deg); }
.toolbar.foot { height: 41px; padding: 0; }
.foot .t { height: 26px; }
.key { position: relative; }
.ringmark { position: absolute; z-index: 3; left: -9px; top: -10px; width: 42px; height: 42px; }
.arrow { position: absolute; z-index: 3; left: -11px; bottom: 50px; width: 52px; height: 162px; }
.fmt { font: 16px/16px "Liberation Serif", serif; color: #333; }
.fmt.small { font-size: 13px; }
.fmt sub, .fmt sup { font-size: 10px; line-height: 8px; font-weight: 700; color: #5b93dc; }
.mirror { transform: scaleX(-1); }

.dialog { position: absolute; left: 438px; top: 498px; width: 662px; height: 438px; display: flex; flex-direction: column; background: #efefef; border: 1px solid #9d9d9d; box-shadow: 2px 4px 12px rgba(0, 0, 0, .3); }
.dhead { display: flex; align-items: center; gap: 6px; height: 44px; padding: 0 17px 0 12px; background: #fff; color: #999; }
.dicon { width: 22px; height: 20px; }
.x { margin-left: auto; }
.dbody { flex: 1; display: flex; flex-direction: column; padding: 14px 10px 54px; }
.dbar { display: flex; gap: 5px; padding-left: 4px; }
.edit { width: 76px; }
.dtabs { margin-top: 9px; }
.dtabs button { height: 30px; padding: 3px 3px 0; }
.dtabs button.sel { border-top: 1px solid #a5a5a5; border-radius: 4px 4px 0 0; font-weight: 400; }
.dtabs button:first-child { padding-left: 4px; }
.dtabs button.more { align-items: flex-start; padding-left: 7px; border-right: 0; line-height: 14px; font-weight: 700; }
.more small { padding-top: 6px; font-size: 10px; font-weight: 400; }
.keys { flex: 1; display: flex; align-items: flex-start; gap: 2px; margin-top: 2px; padding: 6px; border: 2px solid #fff; border-top: 0; }
.keys button { flex: none; height: 54px; padding-top: 4px; overflow: hidden; background: #e1e1e1; border: 1px solid #adadad; font: 28px/40px "Noto Sans", "DejaVu Sans", sans-serif; }
.keys .hi { padding: 0 0 10px; }
.keys .sm { padding: 0 0 20px; font-size: 14px; line-height: 20px; }
.keys .md { padding: 0 0 18px; font-size: 22px; line-height: 24px; }
.k10 { width: 10px; } .k18 { width: 18px; } .k20 { width: 20px; } .k21 { width: 21px; }
.k22 { width: 22px; } .k23 { width: 23px; } .k26 { width: 26px; } .k27 { width: 27px; }
.k28 { width: 28px; } .k29 { width: 29px; } .k30 { width: 30px; } .k32 { width: 32px; }
.k33 { width: 33px; } .k35 { width: 35px; } .k42 { width: 42px; }
```
